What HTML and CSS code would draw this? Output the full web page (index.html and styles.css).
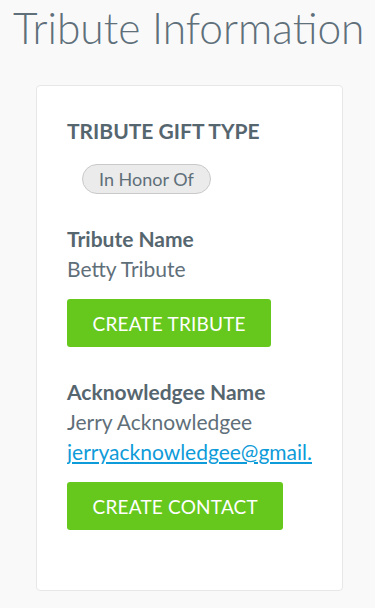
FILE: index.html
```html
<!DOCTYPE html>
<html lang="en">
<head>
<meta charset="utf-8">
<meta name="viewport" content="width=device-width, initial-scale=1">
<title>Tribute Information</title>
<link rel="stylesheet" href="styles.css">
</head>
<body>
<main class="page">
  <h1 class="page-title">Tribute Information</h1>
  <section class="card">
    <h2 class="section-title">TRIBUTE GIFT TYPE</h2>
    <div class="badge-row"><span class="badge">In Honor Of</span></div>
    <div class="field">
      <div class="field-label">Tribute Name</div>
      <div class="field-value">Betty Tribute</div>
    </div>
    <button class="btn" type="button">CREATE TRIBUTE</button>
    <div class="field">
      <div class="field-label">Acknowledgee Name</div>
      <div class="field-value">Jerry Acknowledgee</div>
      <div class="field-value email"><a href="#">jerryacknowledgee@gmail.com</a></div>
    </div>
    <button class="btn" type="button">CREATE CONTACT</button>
  </section>
</main>
</body>
</html>
```
FILE: styles.css
```css
html, body {
  margin: 0;
  padding: 0;
  background: #f9f9f9;
}
body {
  font-family: Lato, "Open Sans", sans-serif;
  color: #5a6a75;
}
.page {
  padding: 0 0 0 13px;
}
.page-title {
  margin: 0;
  padding-top: 3px;
  font-weight: 300;
  font-size: 42.5px;
  line-height: 50px;
  color: #5f707b;
  white-space: nowrap;
}
.card {
  box-sizing: border-box;
  margin: 32px 0 0 23px;
  width: 307px;
  height: 506px;
  background: #fff;
  border: 1px solid #e7e7e7;
  border-radius: 4px;
  padding: 30px 30px 30px 30px;
}
.section-title {
  margin: 0;
  font-size: 21px;
  font-weight: 700;
  line-height: 30px;
  color: #56666f;
}
.badge-row {
  margin: 18px 0 0 15px;
  height: 30px;
}
.badge {
  display: inline-block;
  box-sizing: border-box;
  height: 30px;
  line-height: 28px;
  padding: 0 16px;
  border: 1px solid #c9c9c9;
  border-radius: 15px;
  background: #ebebeb;
  color: #5f6f79;
  font-size: 18px;
}
.field {
  margin-top: 30px;
}
.field-label {
  font-size: 21px;
  font-weight: 700;
  line-height: 30px;
  color: #56666f;
}
.field-value {
  font-size: 21px;
  line-height: 30px;
  color: #5f6f79;
}
.email {
  overflow: hidden;
  white-space: nowrap;
}
.email a {
  color: #0e9bd9;
  text-decoration: underline;
}
.btn {
  display: block;
  margin-top: 15px;
  height: 48px;
  padding: 0 25.5px;
  border: none;
  border-radius: 3px;
  background: #66c81c;
  color: #fff;
  font-family: Lato, "Open Sans", sans-serif;
  font-size: 19px;
  letter-spacing: 0.2px;
}
```
